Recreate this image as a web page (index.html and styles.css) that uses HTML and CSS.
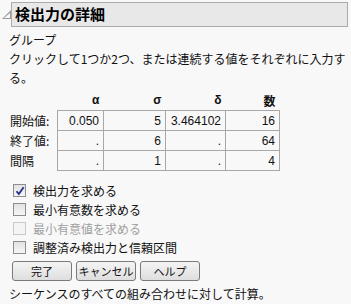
FILE: index.html
```html
<!DOCTYPE html>
<html lang="ja">
<head>
    <meta charset="utf-8">
    <title>検出力の詳細</title>
    <link rel="stylesheet" href="styles.css">
</head>
<body>
    <div class="panel">
        <!-- 見出し -->
        <div class="head">
            <span class="tri"></span>
            <div class="head-box">検出力の詳細</div>
        </div>

        <div class="content">
            <div class="txt">グループ</div>
            <div class="txt msg">クリックして1つか2つ、または連続する値をそれぞれに入力する。</div>

            <table class="grid">
                <tr class="cols">
                    <th></th>
                    <th class="c1">α</th>
                    <th class="c2">σ</th>
                    <th class="c3">δ</th>
                    <th class="c4">数</th>
                </tr>
                <tr>
                    <td class="lbl">開始値:</td>
                    <td class="val">0.050</td>
                    <td class="val">5</td>
                    <td class="val">3.464102</td>
                    <td class="val">16</td>
                </tr>
                <tr>
                    <td class="lbl">終了値:</td>
                    <td class="val">.</td>
                    <td class="val">6</td>
                    <td class="val">.</td>
                    <td class="val">64</td>
                </tr>
                <tr>
                    <td class="lbl">間隔</td>
                    <td class="val">.</td>
                    <td class="val">1</td>
                    <td class="val">.</td>
                    <td class="val">4</td>
                </tr>
            </table>

            <div class="checks">
                <label class="chk"><span class="box on"><svg width="10" height="10" viewBox="0 0 10 10"><path d="M1.5 5.2 L3.8 8 L8.6 1.3" fill="none" stroke="#1f2f8a" stroke-width="1.8"/></svg></span>検出力を求める</label>
                <label class="chk"><span class="box"></span>最小有意数を求める</label>
                <label class="chk off"><span class="box"></span>最小有意値を求める</label>
                <label class="chk"><span class="box"></span>調整済み検出力と信頼区間</label>
            </div>

            <div class="btns">
                <button class="btn">完了</button>
                <button class="btn">キャンセル</button>
                <button class="btn">ヘルプ</button>
            </div>

            <div class="txt">シーケンスのすべての組み合わせに対して計算。</div>
        </div>
    </div>
</body>
</html>
```

FILE: styles.css
```css
body {
    margin: 0;
    background-color: #f8f8f8;
    font-family: "Noto Sans CJK JP", "Liberation Sans", sans-serif;
    font-size: 12px;
    color: #111;
}

/* 見出し */
.head {
    display: flex;
    align-items: center;
    padding: 2px 3px 0 2px;
}
.tri {
    width: 0;
    height: 0;
    border-left: 9px solid transparent;
    border-bottom: 9px solid #9a9a9a;
    position: relative;
}
.tri::after {
    content: "";
    position: absolute;
    left: -7px;
    top: 3px;
    border-left: 6px solid transparent;
    border-bottom: 5px solid #f8f8f8;
}
.head-box {
    flex: 1;
    height: 23px;
    line-height: 22px;
    background-color: #e8e8e8;
    border: 1px solid #ababab;
    padding-left: 3px;
    font-size: 15px;
    font-weight: bold;
    color: #000;
}

.content {
    padding: 3px 0 0 9px;
}
.txt {
    line-height: 19px;
    white-space: nowrap;
}
.msg {
    white-space: normal;
    width: 340px;
}

/* 値の表 */
.grid {
    border-collapse: collapse;
    margin-top: 3px;
    font-family: "Liberation Sans", "Noto Sans CJK JP", sans-serif;
}
.grid th {
    font-weight: bold;
    text-align: right;
    height: 20px;
    padding: 0 4px 0 0;
    font-size: 12px;
    vertical-align: middle;
}
.grid td {
    height: 19px;
    padding: 0 4px 0 0;
    text-align: right;
}
.grid td.val {
    border: 1px solid #a8a8a8;
}
.grid td.lbl {
    text-align: left;
    width: 44px;
    padding: 0 3px 0 1px;
    font-family: "Noto Sans CJK JP", sans-serif;
}
.c1 { width: 42px; }
.c2 { width: 58px; }
.c3 { width: 56px; }
.c4 { width: 50px; }

/* チェックボックス */
.checks {
    margin-top: 10px;
    padding-left: 4px;
}
.chk {
    display: flex;
    align-items: center;
    height: 19px;
}
.box {
    width: 11px;
    height: 11px;
    border: 1px solid #8e8e8e;
    background: linear-gradient(#e2e2e2, #f6f6f6);
    margin-right: 7px;
    display: flex;
    align-items: center;
    justify-content: center;
}
.off {
    color: #a0a0a0;
}
.off .box {
    border-color: #c8c8c8;
    background: #f4f4f4;
}

/* ボタン */
.btns {
    display: flex;
    gap: 4px;
    margin-top: 4px;
    padding-left: 3px;
}
.btn {
    width: 60px;
    height: 20px;
    padding: 0;
    border: 1px solid #7a7a7a;
    border-radius: 3px;
    background: linear-gradient(#f4f4f4, #dedede);
    font-family: "Noto Sans CJK JP", sans-serif;
    font-size: 11px;
    white-space: nowrap;
    color: #111;
}
.btns + .txt {
    margin-top: 3px;
}
```
